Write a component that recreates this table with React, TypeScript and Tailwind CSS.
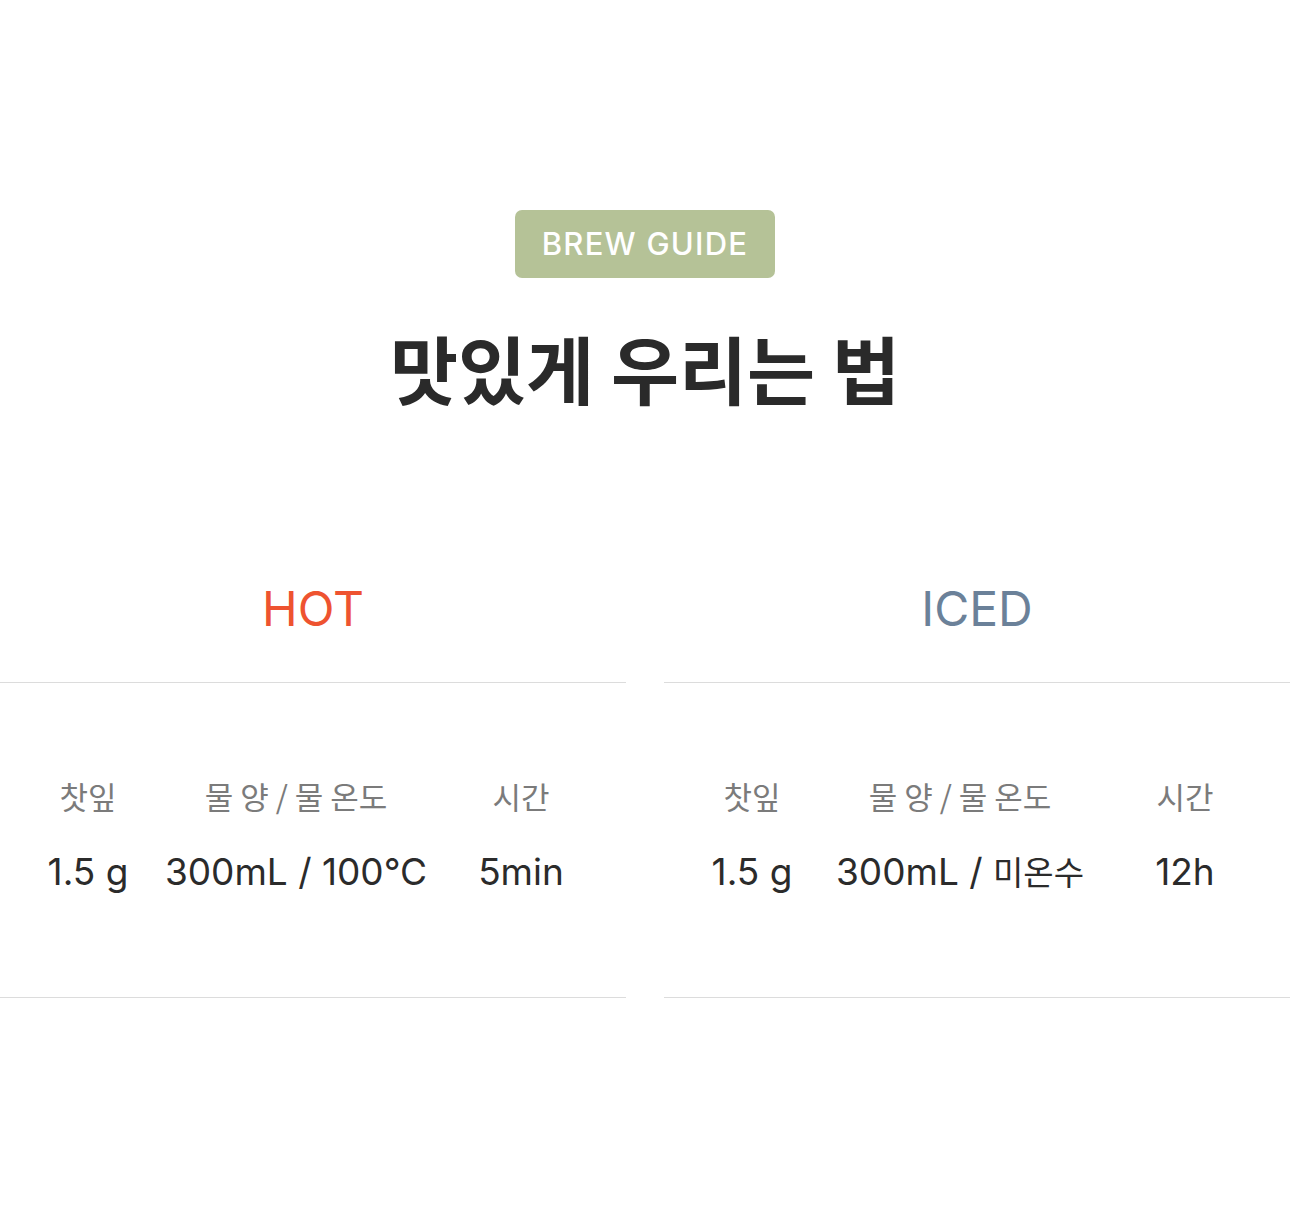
const LATIN = "font-['Inter','Noto_Sans_CJK_KR',sans-serif]";
const KR = "font-['Noto_Sans_CJK_KR','Inter',sans-serif]";

type Row = { label: string; value: React.ReactNode };

/* ─── One brew column (HOT / ICED) ─────────────────────────── */
function BrewColumn({ title, color, rows }: { title: string; color: string; rows: Row[] }) {
  const widths = ['w-[176px]', 'w-[240px]', 'w-[210px]'];
  return (
    <div className="flex flex-col">
      <div className="border-b border-[#dcdcdc] pb-[49px] flex justify-center">
        <h3 className={`${LATIN} text-[48px] leading-none ${color}`}>{title}</h3>
      </div>
      <div className="border-b border-[#dcdcdc] h-[315px] pt-[97px] flex">
        {rows.map((r, i) => (
          <div key={r.label} className={`${widths[i]} shrink-0 flex flex-col items-center`}>
            <div className="flex justify-center w-full">
              <span className={`${KR} text-[31px] leading-none text-[#7b7b7b] whitespace-nowrap`}>{r.label}</span>
            </div>
            <div className="flex justify-center w-full mt-[42px]">
              <span className={`${LATIN} text-[37px] leading-none text-[#2b2b2b] whitespace-nowrap`}>{r.value}</span>
            </div>
          </div>
        ))}
      </div>
    </div>
  );
}

export default function App() {
  return (
    <div className="min-h-[1230px] bg-white flex flex-col items-center pt-[210px]">
      {/* badge */}
      <div className={`${LATIN} h-[68px] px-[27px] rounded-[7px] bg-[#b5c297] flex items-center text-white text-[31px] font-medium tracking-[0.04em]`}>
        BREW GUIDE
      </div>

      {/* title */}
      <h2 className={`${KR} mt-[52px] text-[74px] font-bold leading-none text-[#2a2a2a]`}>
        맛있게 우리는 법
      </h2>

      {/* columns */}
      <div className="mt-[181px] w-full grid grid-cols-2 gap-[38px]">
        <BrewColumn
          title="HOT"
          color="text-[#ee5330]"
          rows={[
            { label: '찻잎', value: '1.5 g' },
            { label: '물 양 / 물 온도', value: '300mL / 100°C' },
            { label: '시간', value: '5min' },
          ]}
        />
        <BrewColumn
          title="ICED"
          color="text-[#6b8199]"
          rows={[
            { label: '찻잎', value: '1.5 g' },
            { label: '물 양 / 물 온도', value: <>300mL / <span className="text-[33px]">미온수</span></> },
            { label: '시간', value: '12h' },
          ]}
        />
      </div>
    </div>
  );
}
